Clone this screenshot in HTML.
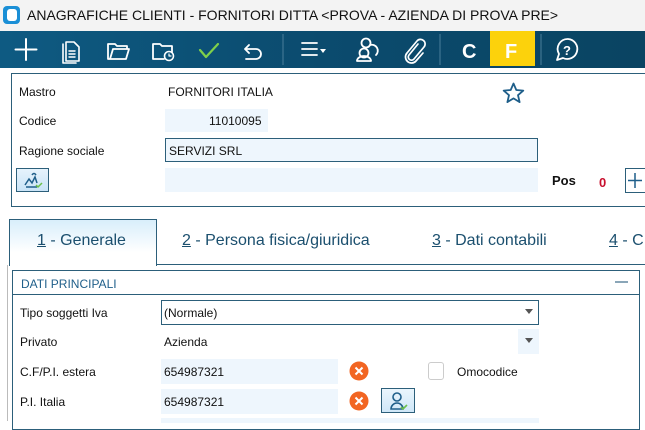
<!DOCTYPE html>
<html><head><meta charset="utf-8"><style>
*{margin:0;padding:0;box-sizing:border-box}
body{width:645px;height:421px;overflow:hidden;background:#fff;font-family:"Liberation Sans",sans-serif;position:relative;color:#111}
.a{position:absolute}
.t{font-size:12px;white-space:nowrap}
.fld{position:absolute;background:#eef6fd}
</style></head><body>
<div class="a" style="left:0;top:0;width:645px;height:31px;background:#f3f3f3"></div>
<div class="a" style="left:3px;top:6px;width:17px;height:18px;background:#1a8fd6;border-radius:4px"></div>
<div class="a" style="left:7px;top:9px;width:10px;height:12px;background:#fff;border-radius:3px"></div>
<div class="a" style="left:27px;top:7px;font-size:14px;color:#111;white-space:nowrap">ANAGRAFICHE CLIENTI - FORNITORI DITTA &lt;PROVA - AZIENDA DI PROVA PRE&gt;</div>
<div class="a" style="left:0;top:31px;width:645px;height:37px;background:linear-gradient(90deg,#0e5a82,#0b4b6e 50%,#0a4462)"></div>
<svg class="a" style="left:0;top:31px" width="645" height="37">
<g stroke="#fff" stroke-width="2" fill="none" stroke-linecap="round" stroke-linejoin="round">
<path d="M26 8v21M15.5 18.5h21"/>
<path d="M66 11h8l5 5v14H66z M63 13v19h13" stroke-width="1.6"/><path d="M69 20h6M69 23h6M69 26h6" stroke-width="1.4"/>
<path d="M108 13h7l2 2h10v3H113l-3 10h-2z M110 28l3-10h16l-3 10z" stroke-width="1.8"/>
<path d="M153 13h7l2 2h10v6 M153 13v15h11" stroke-width="1.8"/><circle cx="169" cy="25" r="4.5" stroke-width="1.6"/><path d="M169 23v2h2" stroke-width="1.2"/>
<path d="M200 19l6 7 12-13" stroke="#7fd04a" stroke-width="2.2"/>
<path d="M249 14l-4 4 4 4M245 18h11a5 5 0 0 1 0 10h-10" stroke-width="1.8"/>
<path d="M302 12h15M302 18h15M302 24h15" stroke-width="1.8"/>
<circle cx="366" cy="12" r="4.5" stroke-width="1.8"/><circle cx="364" cy="22" r="4.5" stroke-width="1.8"/><path d="M357 30a7 5 0 0 1 14 0zM370 14a6 6 0 0 1 6 10" stroke-width="1.8"/>
<path d="M418 13l-9 11a3 3 0 0 0 5 4l10-12a4.5 4.5 0 0 0-7-6l-10 12a6 6 0 0 0 9 8l7-8" stroke-width="1.7"/>
<path d="M568 8a10 10 0 1 1-5 19l-6 2 2-6a10 10 0 0 1 9-15z" stroke-width="1.8"/>
</g>
<path d="M320 18l3 4 3-4z" fill="#fff"/>
<path d="M283 3v31M440 3v31M541 3v31" stroke="#4a7d9a" stroke-width="1"/>
<rect x="490" y="0" width="45" height="35" fill="#fcd20c"/>
<text x="462" y="27" fill="#fff" font-size="20" font-weight="bold" font-family="Liberation Sans">C</text>
<text x="505" y="27" fill="#fff" font-size="20" font-weight="bold" font-family="Liberation Sans">F</text>
<text x="563" y="24" fill="#fff" font-size="13" font-weight="bold" font-family="Liberation Sans">?</text>
</svg>
<div class="a" style="left:11px;top:73px;width:640px;height:134px;border:1.5px solid #2c5f7a"></div>
<div class="a t" style="left:19px;top:85px">Mastro</div>
<div class="a t" style="left:168px;top:85px">FORNITORI ITALIA</div>
<svg class="a" style="left:502px;top:82px" width="23" height="22"><path d="M11.5 1.5l2.8 6.5 7 .6-5.3 4.6 1.6 6.9-6.1-3.7-6.1 3.7 1.6-6.9L1.7 8.6l7-.6z" fill="none" stroke="#1f5f8a" stroke-width="1.8" stroke-linejoin="round"/></svg>
<div class="a t" style="left:19px;top:114px">Codice</div>
<div class="fld" style="left:165px;top:109px;width:103px;height:23px"></div>
<div class="a t" style="left:209px;top:114px">11010095</div>
<div class="a t" style="left:19px;top:144px">Ragione sociale</div>
<div class="fld" style="left:165px;top:138px;width:373px;height:24px;border:1.5px solid #2c5f7a"></div>
<div class="a t" style="left:169px;top:144px">SERVIZI SRL</div>
<div class="a" style="left:16px;top:168px;width:33px;height:24px;border:1px solid #2c5f7a;background:linear-gradient(#e6f3fc,#c9e4f7)"></div>
<svg class="a" style="left:22px;top:170px" width="22" height="20"><path d="M3 15l4-6 3 4 3-6 2 6M4 17h11M10 5q2-3 4 0" fill="none" stroke="#1f5f8a" stroke-width="1.5"/><path d="M14 15l2 2 4-4" fill="none" stroke="#6cc04a" stroke-width="1.5"/></svg>
<div class="fld" style="left:165px;top:168px;width:373px;height:24px"></div>
<div class="a" style="left:552px;top:173px;font-size:13px;font-weight:bold">Pos</div>
<div class="a" style="left:599px;top:175px;font-size:13px;font-weight:bold;color:#c8102e">0</div>
<div class="a" style="left:625px;top:168px;width:30px;height:25px;border:1px solid #2c5f7a"></div>
<svg class="a" style="left:625px;top:168px" width="20" height="25"><path d="M10 5v15M3 12.5h14" stroke="#1f5f8a" stroke-width="1.5"/></svg>
<div class="a" style="left:9px;top:219px;width:148px;height:47px;border:1px solid #2c5f7a;border-bottom:none;background:linear-gradient(#d8eefb,#fff 70%)"></div>
<div class="a" style="left:156px;top:264px;width:489px;height:1px;background:#2c5f7a"></div>
<div class="a" style="left:7px;top:265px;width:1px;height:156px;background:#bbb"></div>
<div class="a" style="left:37px;top:232px;font-size:16px;color:#1b4f6e"><u>1</u> - Generale</div>
<div class="a" style="left:182px;top:232px;font-size:16px;color:#1b4f6e"><u>2</u> - Persona fisica/giuridica</div>
<div class="a" style="left:432px;top:232px;font-size:16px;color:#1b4f6e"><u>3</u> - Dati contabili</div>
<div class="a" style="left:609px;top:232px;font-size:16px;color:#1b4f6e"><u>4</u> - C</div>
<div class="a" style="left:12px;top:270px;width:628px;height:160px;border:1px solid #2c5f7a"></div>
<div class="a" style="left:12px;top:294px;width:628px;height:1px;background:#2c5f7a"></div>
<div class="a" style="left:21px;top:277px;font-size:12px;color:#1f5f8a">DATI PRINCIPALI</div>
<div class="a" style="left:615px;top:281px;width:13px;height:2px;background:#8aa6b8"></div>
<div class="a t" style="left:20px;top:306px">Tipo soggetti Iva</div>
<div class="a" style="left:161px;top:300px;width:378px;height:25px;border:1.5px solid #2c5f7a;background:#fff"></div>
<div class="a t" style="left:164px;top:306px">(Normale)</div>
<svg class="a" style="left:525px;top:309px" width="8" height="5"><path d="M0 0h8L4 5z" fill="#555"/></svg>
<div class="a t" style="left:20px;top:335px">Privato</div>
<div class="fld" style="left:161px;top:329px;width:378px;height:25px;background:#fff"></div>
<div class="fld" style="left:518px;top:329px;width:21px;height:25px"></div>
<div class="a t" style="left:164px;top:335px">Azienda</div>
<svg class="a" style="left:525px;top:338px" width="8" height="5"><path d="M0 0h8L4 5z" fill="#555"/></svg>
<div class="a t" style="left:20px;top:365px">C.F/P.I. estera</div>
<div class="fld" style="left:161px;top:359px;width:177px;height:25px"></div>
<div class="a t" style="left:164px;top:365px">654987321</div>
<div class="a t" style="left:20px;top:395px">P.I. Italia</div>
<div class="fld" style="left:161px;top:389px;width:177px;height:25px"></div>
<div class="a t" style="left:164px;top:395px">654987321</div>
<div class="fld" style="left:161px;top:418px;width:378px;height:5px"></div>
<svg class="a" style="left:349px;top:361px" width="20" height="50"><g stroke="#fff" stroke-width="2"><circle cx="10" cy="10" r="9.5" fill="#f26522" stroke="none"/><path d="M6.5 6.5l7 7M13.5 6.5l-7 7"/><circle cx="10" cy="40" r="9.5" fill="#f26522" stroke="none"/><path d="M6.5 36.5l7 7M13.5 36.5l-7 7"/></g></svg>
<div class="a" style="left:428px;top:362px;width:16px;height:18px;border:1.5px solid #ccc;border-radius:3px;background:#fff"></div>
<div class="a t" style="left:457px;top:365px">Omocodice</div>
<div class="a" style="left:381px;top:388px;width:34px;height:25px;border:1px solid #2c5f7a;background:linear-gradient(#eaf5fc,#cfe7f8)"></div>
<svg class="a" style="left:388px;top:390px" width="22" height="22"><circle cx="9" cy="7" r="4" fill="none" stroke="#1f5f8a" stroke-width="1.6"/><path d="M3 19a6 6 0 0 1 12 0z" fill="none" stroke="#1f5f8a" stroke-width="1.6"/><path d="M13 17l2 2 4-4" fill="none" stroke="#6cc04a" stroke-width="1.6"/></svg>
</body></html>
